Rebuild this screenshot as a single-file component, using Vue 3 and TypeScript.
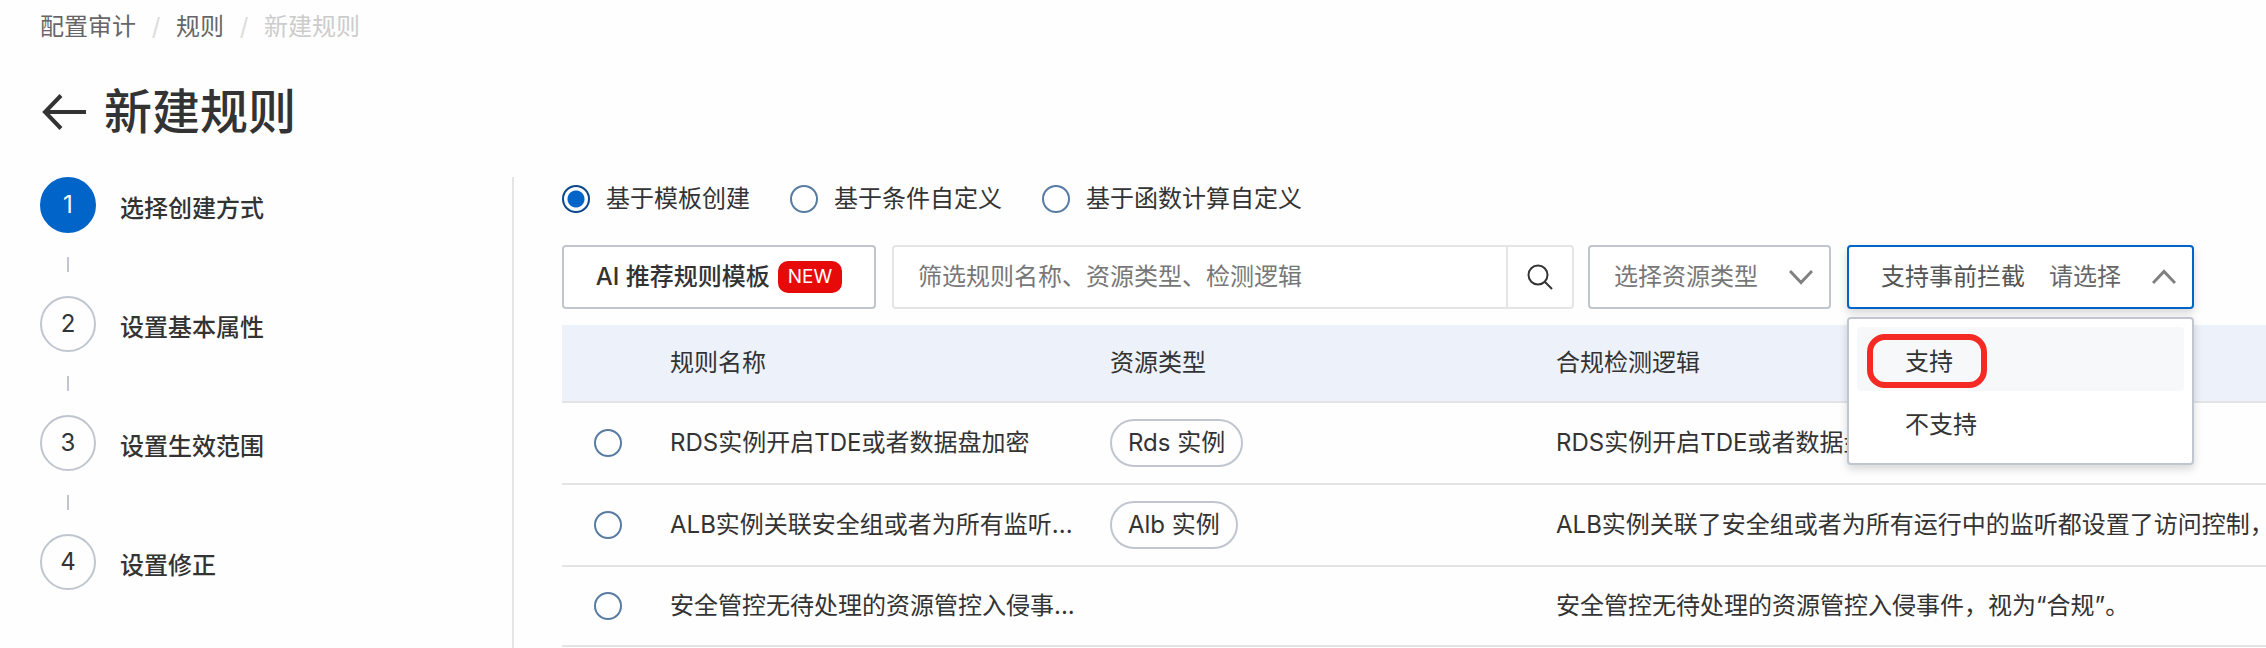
<script setup lang="ts">
import { ref } from 'vue'

interface Rule {
  id: string
  name: string
  resource: string
  logic: string
}

const steps: string[] = ['选择创建方式', '设置基本属性', '设置生效范围', '设置修正']
const activeStep = ref(0)

const modes = [
  { value: 'template', label: '基于模板创建' },
  { value: 'condition', label: '基于条件自定义' },
  { value: 'function', label: '基于函数计算自定义' },
]
const mode = ref('template')

const keyword = ref('')
const resourceType = ref('')
const intercept = ref('')
const menuOpen = ref(true)
const interceptOptions: string[] = ['支持', '不支持']

const selectedRule = ref('')
const rules: Rule[] = [
  { id: 'rds-tde', name: 'RDS实例开启TDE或者数据盘加密', resource: 'Rds 实例', logic: 'RDS实例开启TDE或者数据盘加密' },
  { id: 'alb-acl', name: 'ALB实例关联安全组或者为所有监听...', resource: 'Alb 实例', logic: 'ALB实例关联了安全组或者为所有运行中的监听都设置了访问控制，' },
  { id: 'security', name: '安全管控无待处理的资源管控入侵事...', resource: '', logic: '安全管控无待处理的资源管控入侵事件，视为“合规”。' },
]
</script>

<template>
  <div class="page">
    <nav class="breadcrumb">
      <a href="#">配置审计</a>
      <span class="slash">/</span>
      <a href="#">规则</a>
      <span class="slash">/</span>
      <span class="current">新建规则</span>
    </nav>

    <header class="title">
      <button class="back" type="button" aria-label="返回">
        <svg width="44" height="36" viewBox="0 0 44 36" fill="none" stroke="#333" stroke-width="4">
          <path d="M44 18H3M19 1.5L3 18L19 34.5" />
        </svg>
      </button>
      <h1>新建规则</h1>
    </header>

    <div class="body">
      <ol class="steps">
        <li v-for="(step, i) in steps" :key="step" :class="{ active: i === activeStep }">
          <span class="num">{{ i + 1 }}</span>
          <span class="step-label">{{ step }}</span>
        </li>
      </ol>

      <main>
        <div class="modes" role="radiogroup">
          <label v-for="m in modes" :key="m.value">
            <input v-model="mode" class="radio" type="radio" name="mode" :value="m.value" />
            {{ m.label }}
          </label>
        </div>

        <div class="toolbar">
          <button class="ai" type="button">AI 推荐规则模板<span class="badge">NEW</span></button>

          <div class="search">
            <input v-model="keyword" type="text" aria-label="筛选规则" placeholder="筛选规则名称、资源类型、检测逻辑" />
            <button type="button" aria-label="搜索">
              <svg width="26" height="26" viewBox="0 0 26 26" fill="none" stroke="#333" stroke-width="2">
                <circle cx="11" cy="11" r="9.5" />
                <path d="M17.5 17.5L25 25" />
              </svg>
            </button>
          </div>

          <div class="field type">
            <select v-model="resourceType" aria-label="资源类型">
              <option value="">选择资源类型</option>
            </select>
            <svg class="chevron" width="24" height="16" viewBox="0 0 24 16" fill="none" stroke="#808080" stroke-width="3">
              <path d="M1 2L12 13.5L23 2" />
            </svg>
          </div>

          <div class="field intercept">
            <label for="intercept">支持事前拦截</label>
            <select id="intercept" v-model="intercept">
              <option value="">请选择</option>
            </select>
            <svg class="chevron" width="24" height="16" viewBox="0 0 24 16" fill="none" stroke="#808080" stroke-width="3">
              <path d="M1 14L12 2.5L23 14" />
            </svg>
            <ul v-if="menuOpen" class="menu" role="listbox" aria-label="支持事前拦截">
              <li v-for="(o, i) in interceptOptions" :key="o" role="option" :class="{ hover: i === 0 }">
                <span :class="{ mark: i === 0 }">{{ o }}</span>
              </li>
            </ul>
          </div>
        </div>

        <table>
          <colgroup>
            <col class="c-radio" />
            <col class="c-name" />
            <col class="c-type" />
            <col />
          </colgroup>
          <thead>
            <tr>
              <th></th>
              <th>规则名称</th>
              <th>资源类型</th>
              <th>合规检测逻辑</th>
            </tr>
          </thead>
          <tbody>
            <tr v-for="r in rules" :key="r.id">
              <td class="pick">
                <input v-model="selectedRule" class="radio" type="radio" name="rule" :value="r.id" :aria-label="r.name" />
              </td>
              <td>{{ r.name }}</td>
              <td><span v-if="r.resource" class="tag">{{ r.resource }}</span></td>
              <td>{{ r.logic }}</td>
            </tr>
          </tbody>
        </table>
      </main>
    </div>
  </div>
</template>

<style>
body {
  background: #fefefe;
}
</style>

<style scoped>
.page,
.page * {
  box-sizing: border-box;
}

.page {
  min-height: 100vh;
  display: flex;
  flex-direction: column;
  overflow: hidden;
  background: #fefefe;
  color: #333;
  font: 24px/36px Inter, "Noto Sans CJK SC", sans-serif;
}

button,
input,
select {
  font: inherit;
  color: inherit;
  margin: 0;
}

.breadcrumb {
  display: flex;
  padding: 9px 40px 0;
}

.breadcrumb a {
  color: #666;
  text-decoration: none;
}

.breadcrumb .slash {
  width: 40px;
  text-align: center;
  color: #ddd;
}

.breadcrumb .current {
  color: #ccc;
}

.title {
  display: flex;
  align-items: center;
  gap: 18px;
  padding: 31px 42px 29px;
}

.back {
  display: flex;
  padding: 0;
  border: 0;
  background: none;
}

h1 {
  margin: 0;
  font-size: 48px;
  line-height: 72px;
  font-weight: 500;
}

.body {
  flex: 1;
  display: flex;
}

.steps {
  flex: none;
  width: 514px;
  margin: 0;
  padding: 0 0 0 40px;
  list-style: none;
  border-right: 2px solid #e5e5e5;
}

.steps li {
  display: grid;
  grid-template-columns: 56px 1fr;
  column-gap: 24px;
}

.steps li:not(:last-child)::after {
  content: "";
  width: 2px;
  height: 15px;
  margin: 24px auto;
  background: #c0c6cf;
}

.num {
  display: flex;
  align-items: center;
  justify-content: center;
  width: 56px;
  height: 56px;
  border: 2px solid #c0c6cf;
  border-radius: 50%;
}

.active .num {
  background: #0064c8;
  border-color: #0064c8;
  color: #fff;
}

.step-label {
  padding-top: 14px;
  font-weight: 500;
}

main {
  flex: 1;
  min-width: 0;
  padding-left: 48px;
}

.modes {
  display: flex;
  gap: 40px;
  padding: 4px 0 28px;
}

.modes label {
  display: flex;
  align-items: center;
  gap: 16px;
}

.radio {
  appearance: none;
  flex: none;
  width: 28px;
  height: 28px;
  border: 2px solid #577ba3;
  border-radius: 50%;
  background: #fff;
}

.radio:checked {
  border-color: #0a478c;
  background: radial-gradient(circle, #0064c8 8px, #fff 9px);
}

.toolbar {
  display: flex;
  height: 64px;
  margin: 0 72px 16px 0;
}

.ai {
  flex: none;
  width: 314px;
  display: flex;
  align-items: center;
  justify-content: center;
  gap: 8px;
  padding: 0;
  border: 2px solid #c0c6cf;
  border-radius: 4px;
  background: #fff;
  font-weight: 500;
}

.badge {
  padding: 0 10px;
  border-radius: 10px;
  background: #e60a0a;
  color: #fff;
  font-size: 19px;
  line-height: 32px;
  font-weight: 400;
}

.search {
  flex: 1;
  min-width: 0;
  display: flex;
  margin: 0 14px 0 16px;
  border: 2px solid #e5e5e5;
  border-radius: 4px;
  background: #fff;
}

.search input {
  flex: 1;
  min-width: 0;
  padding: 0 24px;
  border: 0;
  outline: 0;
  background: none;
}

.search input::placeholder {
  color: #777;
  opacity: 1;
}

.search button {
  width: 66px;
  display: flex;
  align-items: center;
  justify-content: center;
  padding: 0;
  border: 0;
  border-left: 2px solid #e5e5e5;
  background: none;
}

.field {
  flex: none;
  position: relative;
  display: flex;
  align-items: center;
  border: 2px solid #c0c6cf;
  border-radius: 4px;
  background: #fff;
  padding: 0 16px 0 24px;
  color: #777;
}

.field select {
  appearance: none;
  flex: 1;
  min-width: 0;
  padding: 0;
  border: 0;
  outline: 0;
  background: none;
}

.chevron {
  flex: none;
}

.type {
  width: 243px;
  margin-right: 16px;
}

.intercept {
  width: 347px;
  padding-left: 32px;
  gap: 24px;
  border-color: #0064c8;
  color: #555;
  box-shadow: 0 4px 8px rgba(0, 0, 0, 0.16);
}

.intercept select {
  color: #666;
}

.menu {
  position: absolute;
  z-index: 1;
  top: 70px;
  left: -2px;
  right: -2px;
  margin: 0;
  padding: 8px;
  list-style: none;
  border: 2px solid #c0c6cf;
  border-radius: 4px;
  background: #fff;
  color: #333;
  box-shadow: 0 4px 8px rgba(0, 0, 0, 0.16);
}

.menu li {
  display: flex;
  align-items: center;
  height: 64px;
  padding: 4px 0 0 48px;
  border-radius: 4px;
}

.menu .hover {
  padding-left: 10px;
  background: #f7f8fa;
}

.mark {
  padding: 4px 28px 2px 32px;
  border: 6px solid #f52a24;
  border-radius: 18px;
}

table {
  width: 100%;
  table-layout: fixed;
  border-collapse: separate;
  border-spacing: 0;
  white-space: nowrap;
}

.c-radio {
  width: 92px;
}

.c-name {
  width: 440px;
}

.c-type {
  width: 446px;
}

th,
td {
  padding: 0 16px;
  border-bottom: 2px solid #e3e4e6;
  text-align: left;
  font-weight: 400;
}

th {
  height: 78px;
  background: #edf1f9;
}

td {
  height: 80px;
  padding: 16px;
}

.pick {
  padding-left: 32px;
}

.pick .radio {
  display: block;
}

.tag {
  display: block;
  width: fit-content;
  padding: 4px 16px;
  border: 2px solid #c0c6cf;
  border-radius: 24px;
  line-height: 36px;
}
</style>
